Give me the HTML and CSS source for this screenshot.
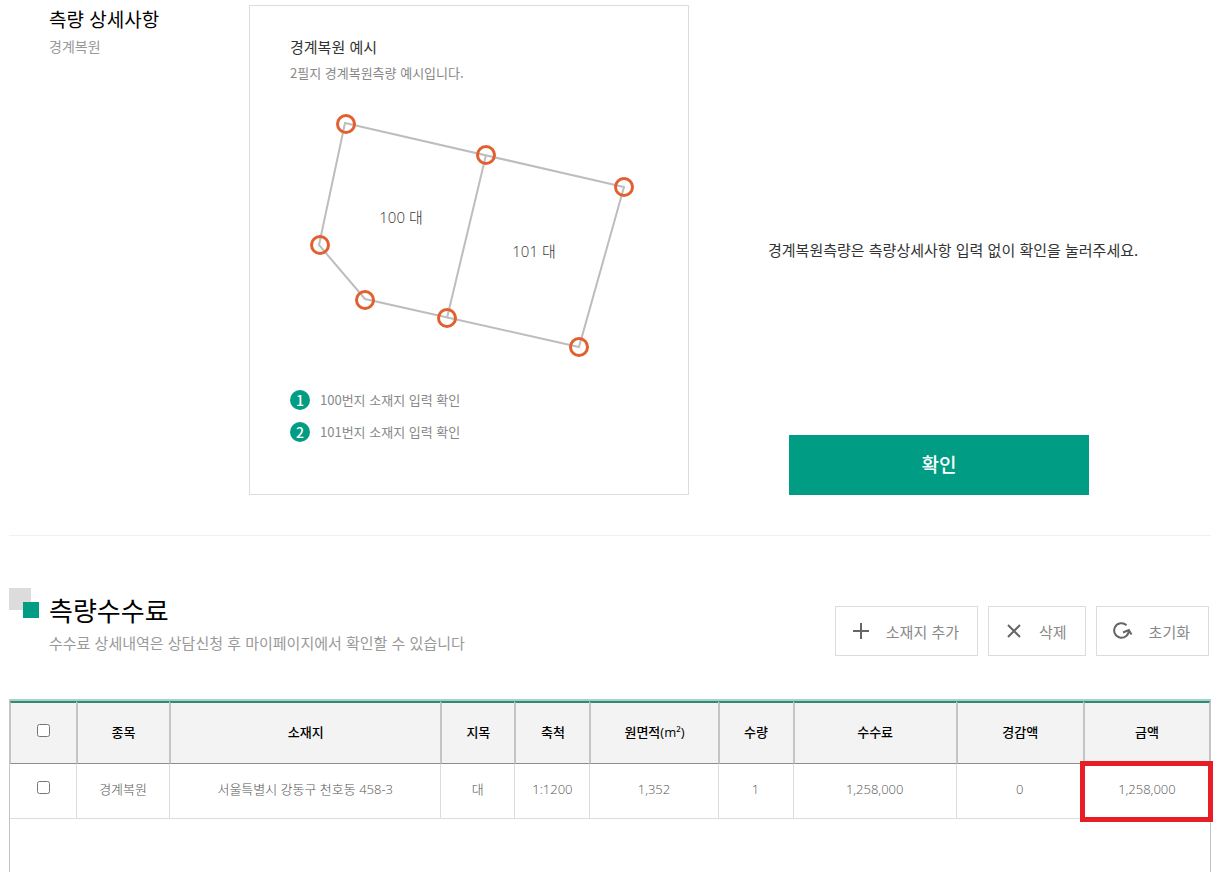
FILE: index.html
```html
<!DOCTYPE html>
<html lang="ko">
<head>
  <meta charset="utf-8">
  <title>측량수수료</title>
  <link rel="stylesheet" href="styles.css">
</head>
<body>
  <section class="detail">
    <div class="detail-title">
      <h2>측량 상세사항</h2>
      <p>경계복원</p>
    </div>
    <div class="card">
      <h3>경계복원 예시</h3>
      <p class="card-desc">2필지 경계복원측량 예시입니다.</p>
      <svg class="lot-map" width="358" height="260" viewBox="0 0 358 260">
        <g fill="none" stroke="#bdbdbd" stroke-width="2">
          <path d="M55 13L334 77L289 237L75 189L29 135Z"/>
          <path d="M196 45L157 208"/>
        </g>
        <g fill="none" stroke="#e2602f" stroke-width="3">
          <circle cx="56" cy="14" r="8.5"/>
          <circle cx="196" cy="45" r="8.5"/>
          <circle cx="334" cy="77" r="8.5"/>
          <circle cx="30" cy="135" r="8.5"/>
          <circle cx="75" cy="190" r="8.5"/>
          <circle cx="157" cy="208" r="8.5"/>
          <circle cx="289" cy="237" r="8.5"/>
        </g>
        <text x="111" y="113" text-anchor="middle">100 대</text>
        <text x="244" y="147" text-anchor="middle">101 대</text>
      </svg>
      <ol class="steps">
        <li><span class="num">1</span>100번지 소재지 입력 확인</li>
        <li><span class="num">2</span>101번지 소재지 입력 확인</li>
      </ol>
    </div>
    <div class="confirm">
      <p>경계복원측량은 측량상세사항 입력 없이 확인을 눌러주세요.</p>
      <button type="button" class="btn-confirm">확인</button>
    </div>
  </section>

  <section class="fee">
    <div class="fee-head">
      <svg class="mark" width="30" height="30" viewBox="0 0 30 30">
        <rect width="22" height="22" fill="#dcdcdc"/>
        <rect x="14" y="14" width="16" height="16" fill="#009d84"/>
      </svg>
      <div class="fee-title">
        <h1>측량수수료</h1>
        <p>수수료 상세내역은 상담신청 후 마이페이지에서 확인할 수 있습니다</p>
      </div>
      <div class="tools">
        <button type="button">
          <svg width="18" height="18" viewBox="0 0 18 18"><path d="M9 1V17M1 9H17"/></svg>
          소재지 추가
        </button>
        <button type="button">
          <svg width="18" height="18" viewBox="0 0 18 18"><path d="M3 3L15 15M15 3L3 15"/></svg>
          삭제
        </button>
        <button type="button">
          <svg width="20" height="18" viewBox="0 0 20 18"><path d="M13.500 3.200A7.300 7.300 0 1 0 15.800 8.500M10 10.500L15.800 8L18.500 12.500"/></svg>
          초기화
        </button>
      </div>
    </div>

    <div class="table-box">
      <table>
        <colgroup>
          <col style="width:66px"><col style="width:93px"><col style="width:271px">
          <col style="width:74px"><col style="width:75px"><col style="width:128px">
          <col style="width:75px"><col style="width:163px"><col style="width:127px"><col style="width:127px">
        </colgroup>
        <thead>
          <tr>
            <th><input type="checkbox" aria-label="전체 선택"></th>
            <th>종목</th>
            <th>소재지</th>
            <th>지목</th>
            <th>축척</th>
            <th>원면적(m²)</th>
            <th>수량</th>
            <th>수수료</th>
            <th>경감액</th>
            <th>금액</th>
          </tr>
        </thead>
        <tbody>
          <tr>
            <td><input type="checkbox" aria-label="경계복원 선택"></td>
            <td>경계복원</td>
            <td>서울특별시 강동구 천호동 458-3</td>
            <td>대</td>
            <td>1:1200</td>
            <td>1,352</td>
            <td>1</td>
            <td>1,258,000</td>
            <td>0</td>
            <td class="total">1,258,000</td>
          </tr>
        </tbody>
      </table>
    </div>
  </section>
</body>
</html>
```

FILE: styles.css
```css
* {
  box-sizing: border-box;
}

body {
  display: flex;
  flex-direction: column;
  min-height: 100vh;
  margin: 0;
  padding: 5px 12px 0 9px;
  background: #fff;
  color: #333;
  font-family: "Noto Sans CJK KR", sans-serif;
  font-size: 15px;
  line-height: 22px;
}

h1, h2, h3, p, ol {
  margin: 0;
  padding: 0;
  font-weight: 400;
}

button {
  font-family: inherit;
  cursor: pointer;
}

/* survey detail */
.detail {
  display: grid;
  grid-template-columns: 240px 440px 1fr;
  padding-bottom: 40px;
  border-bottom: 1px solid #f1f1f1;
}

.detail-title {
  padding-left: 40px;
}

.detail-title h2 {
  color: #000;
  font-size: 19px;
  line-height: 28px;
}

.detail-title p {
  color: #999;
  font-size: 14px;
  line-height: 26px;
}

.card {
  height: 490px;
  padding: 30px 40px 0;
  border: 1px solid #dcdcdc;
}

.card h3 {
  font-size: 15px;
}

.card-desc {
  padding-top: 4px;
  color: #888;
  font-size: 13px;
}

.lot-map {
  display: block;
  margin-top: 26px;
}

.lot-map text {
  fill: #333;
  font-family: "Open Sans", "Noto Sans CJK KR", sans-serif;
  font-size: 15px;
  font-weight: 300;
}

.steps {
  padding-top: 14px;
  list-style: none;
}

.steps li {
  display: flex;
  align-items: center;
  gap: 10px;
  height: 32px;
  color: #888;
  font-size: 13px;
}

.num {
  width: 20px;
  height: 20px;
  border-radius: 50%;
  background: #009d84;
  color: #fff;
  font-size: 14px;
  font-weight: 500;
  line-height: 20px;
  text-align: center;
}

.confirm {
  display: grid;
  grid-template-rows: 1fr auto 1fr;
  padding-left: 79px;
}

.confirm p {
  grid-row: 2;
}

.btn-confirm {
  grid-row: 3;
  align-self: end;
  width: 300px;
  height: 60px;
  margin-left: 21px;
  padding: 0 0 4px;
  border: 0;
  background: #009d84;
  color: #fff;
  font-size: 19px;
  font-weight: 500;
}

/* fee */
.fee {
  display: flex;
  flex-direction: column;
  flex: 1;
  padding-top: 52px;
}

.fee-head {
  display: flex;
  height: 111px;
}

.fee-title {
  flex: 1;
  padding-left: 10px;
}

.fee-title h1 {
  color: #000;
  font-size: 26px;
  line-height: 44px;
}

.fee-title p {
  color: #999;
}

.tools {
  display: flex;
  gap: 10px;
  padding: 18px 2px 0 0;
}

.tools button {
  display: flex;
  align-items: center;
  gap: 16px;
  height: 50px;
  padding: 0 18px 0 16px;
  border: 1px solid #dcdcdc;
  background: #fff;
  color: #888;
  font-size: 15px;
}

.tools svg {
  fill: none;
  stroke: #666;
  stroke-width: 2;
}

.table-box {
  flex: 1;
  border: 1px solid #c4c4c4;
  border-top: 2px solid #a5d3c9;
  border-bottom: 0;
}

table {
  width: 100%;
  table-layout: fixed;
  border-collapse: separate;
  border-spacing: 0;
  font-family: "Open Sans", "Noto Sans CJK KR", sans-serif;
  font-size: 13px;
  text-align: center;
}

th {
  height: 63px;
  padding: 0 0 2px;
  border-top: 2px solid #318874;
  border-bottom: 1px solid #8c8c8c;
  border-left: 2px solid #c4c4c4;
  background: #f3f3f3;
  color: #000;
  font-weight: 500;
}

td {
  height: 55px;
  padding: 0 0 4px;
  border-bottom: 1px solid #dcdcdc;
  border-left: 1px solid #dcdcdc;
  color: #555;
  font-weight: 300;
}

th:first-child {
  border-left: 1px solid #c4c4c4;
}

th:last-child {
  border-right: 1px solid #c4c4c4;
}

td:first-child {
  border-left: 0;
}

input[type="checkbox"] {
  width: 13px;
  height: 13px;
  margin: 0;
}

/* highlighted amount */
.total {
  position: relative;
}

.total::after {
  content: "";
  position: absolute;
  inset: -3px -3px -4px -4px;
  border: 5px solid #e81e26;
}
```
